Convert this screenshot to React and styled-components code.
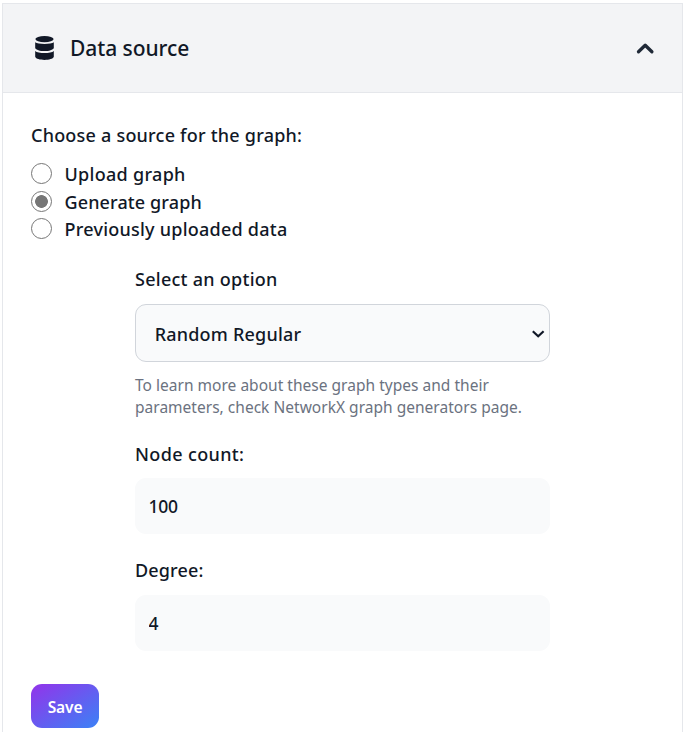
import React, { useState } from 'react';
import styled, { createGlobalStyle } from 'styled-components';

const GlobalStyle = createGlobalStyle`
  *, *::before, *::after { box-sizing: border-box; }
  body { margin: 0; background: #fff; overflow: hidden; }
  body, input, select, button { font-family: "Noto Sans", "Segoe UI", sans-serif; color: #111827; }
`;

const Panel = styled.main`
  width: 681px;
  height: 729px;
  margin: 3px 0 0 2px;
  border: 1px solid #e5e7eb;
  border-bottom: 0;
`;

const Header = styled.button`
  display: flex;
  align-items: center;
  justify-content: space-between;
  width: 100%;
  height: 89px;
  padding: 0 27px 0 32px;
  border: 0;
  border-bottom: 1px solid #e5e7eb;
  background: #f3f4f6;
`;

const Title = styled.span`
  display: flex;
  align-items: center;
  gap: 16px;
  font-size: 21px;
  font-weight: 500;
  line-height: 30px;
  letter-spacing: -0.06px;
`;

const Content = styled.form`
  padding: 28px;
`;

const Label = styled.label`
  display: block;
  margin-top: ${(p) => p.$top || 0}px;
  font-size: 18px;
  font-weight: 500;
  line-height: 28px;
  letter-spacing: ${(p) => p.$spacing}px;
`;

const RadioGroup = styled.div`
  margin-top: 11px;
`;

const RadioRow = styled.label`
  display: flex;
  align-items: center;
  gap: 12.5px;
  height: 27.5px;
  font-size: 18px;
  font-weight: 500;
  line-height: 28px;
  letter-spacing: ${(p) => p.$spacing}px;
`;

const RadioText = styled.span`
  padding-top: 0.5px;
`;

const Radio = styled.input`
  appearance: none;
  width: 21px;
  height: 21px;
  margin: 0;
  border: 1.5px solid #767676;
  border-radius: 50%;
  background: #fff;
  &:checked {
    background: radial-gradient(circle, #767676 6px, #fff 6.7px);
  }
`;

const Options = styled.div`
  width: 415px;
  margin: 22.5px 0 0 104px;
`;

const SelectBox = styled.div`
  display: grid;
  align-items: center;
  margin-top: 11px;
  > * { grid-area: 1 / 1; }
  > svg { justify-self: end; margin: 1px 5px 0 0; pointer-events: none; }
`;

const Select = styled.select`
  appearance: none;
  width: 100%;
  height: 58px;
  padding: 2px 18.7px 0;
  border: 1px solid #d1d5db;
  border-radius: 11px;
  background: #f9fafb;
  font-size: 18px;
  font-weight: 500;
  letter-spacing: 0.2px;
`;

const Help = styled.p`
  margin: 12px 0 0;
  color: #6b7280;
  font-size: 15.5px;
  line-height: 22px;
  letter-spacing: 0.02px;
  white-space: nowrap;
`;

const Input = styled.input`
  display: block;
  width: 100%;
  height: 56px;
  margin-top: ${(p) => p.$top}px;
  padding: 0 13.5px;
  border: 0;
  border-radius: 11px;
  background: #f9fafb;
  font-size: 17.5px;
  font-weight: 500;
  letter-spacing: -0.2px;
`;

const Save = styled.button`
  display: block;
  width: 68px;
  height: 44px;
  margin-top: 33px;
  padding: 1px 0 0;
  border: 0;
  border-radius: 11px;
  background: linear-gradient(to bottom right, #9333ea, #3b82f6);
  color: #fff;
  font-size: 15.5px;
  font-weight: 600;
  letter-spacing: -0.1px;
`;

const DatabaseIcon = () => (
  <svg width="19" height="24" viewBox="0 0 19 24" fill="#111827">
    <ellipse cx="9.5" cy="3.1" rx="9.1" ry="3.1" />
    <path d="M.2 6.2C2.8 8.5 16.2 8.5 18.8 6.2V12C17.5 16.1 1.5 16.1.2 12Z" />
    <path d="M.2 14.9C2.8 17.7 16.2 17.7 18.8 14.9V20.8C17.5 25 1.5 25 .2 20.8Z" />
  </svg>
);

const ChevronUp = () => (
  <svg width="20" height="14" viewBox="0 0 20 14" fill="none" stroke="#1f2937" strokeWidth="3.3" strokeLinecap="round" strokeLinejoin="round">
    <path d="M3.5 10.8 10.2 4.2 16.9 10.8" />
  </svg>
);

const ChevronDown = () => (
  <svg width="14" height="10" viewBox="0 0 14 10" fill="none" stroke="#111827" strokeWidth="2.2">
    <path d="M1.8 2.2 7.2 7.2 12.6 2.2" />
  </svg>
);

const SOURCES = [
  { text: 'Upload graph', spacing: 0.3 },
  { text: 'Generate graph', spacing: 0.12 },
  { text: 'Previously uploaded data', spacing: 0.24 },
];

export default function App() {
  const [source, setSource] = useState(SOURCES[1].text);
  return (
    <>
      <GlobalStyle />
      <Panel>
        <Header type="button">
          <Title><DatabaseIcon />Data source</Title>
          <ChevronUp />
        </Header>
        <Content>
          <Label as="div" $spacing={0.22}>Choose a source for the graph:</Label>
          <RadioGroup>
            {SOURCES.map((s) => (
              <RadioRow key={s.text} $spacing={s.spacing}>
                <Radio type="radio" name="source" checked={source === s.text} onChange={() => setSource(s.text)} />
                <RadioText>{s.text}</RadioText>
              </RadioRow>
            ))}
          </RadioGroup>
          <Options>
            <Label htmlFor="type" $spacing={0.27}>Select an option</Label>
            <SelectBox>
              <Select id="type"><option>Random Regular</option></Select>
              <ChevronDown />
            </SelectBox>
            <Help>To learn more about these graph types and their<br />parameters, check NetworkX graph generators page.</Help>
            <Label htmlFor="nodes" $top={22} $spacing={0.36}>Node count:</Label>
            <Input id="nodes" $top={10} defaultValue="100" />
            <Label htmlFor="degree" $top={22} $spacing={0.15}>Degree:</Label>
            <Input id="degree" $top={11} defaultValue="4" />
          </Options>
          <Save type="button">Save</Save>
        </Content>
      </Panel>
    </>
  );
}
